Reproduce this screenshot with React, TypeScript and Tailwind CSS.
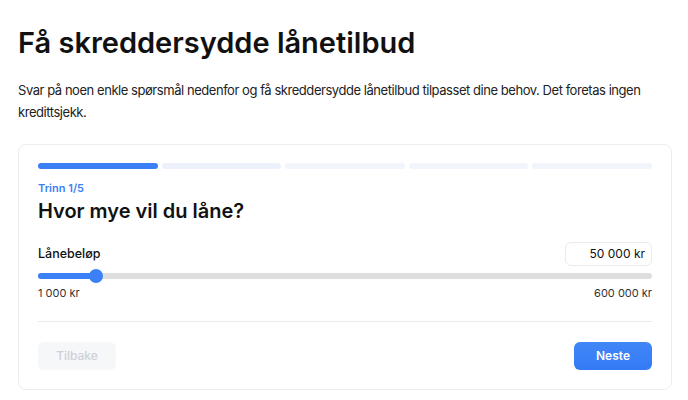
import { useState } from "react";

const MIN = 1000;
const MAX = 600000;
const STEPS = 5;

function formatKr(n: number) {
  return n.toLocaleString("en-US").replace(/,/g, " ") + " kr";
}

export default function App() {
  const [amount] = useState(50000);
  const step = 1;
  const pct = (amount - MIN) / (MAX - MIN);

  return (
    <div
      className="min-h-screen bg-white pt-[26px] pl-[18px] pr-[16px] text-[#111]"
      style={{ fontFamily: "Inter, 'Noto Sans', sans-serif" }}
    >
      <h1 className="text-[29px] leading-[34px] font-semibold">Få skreddersydde lånetilbud</h1>
      <p className="mt-[19px] text-[13px] leading-[22px] tracking-[-0.45px] text-[#222]">
        Svar på noen enkle spørsmål nedenfor og få skreddersydde lånetilbud tilpasset dine behov. Det foretas ingen
        kredittsjekk.
      </p>

      {/* Wizard card */}
      <div className="mt-[21px] w-[654px] rounded-lg border border-[#ededf0] px-[19px] pt-[18px] pb-[19px]">
        <div className="flex gap-1">
          {Array.from({ length: STEPS }).map((_, i) => (
            <div
              key={i}
              className={`h-[6px] flex-1 rounded-full ${
                i < step ? "bg-[#3b80f6]" : i === step ? "bg-[#ecf1fc]" : "bg-[#f2f5fb]"
              }`}
            />
          ))}
        </div>

        <div className="mt-[11px] text-[11px] leading-4 font-semibold text-[#3b80f6]">
          Trinn {step}/{STEPS}
        </div>
        <h2 className="mt-[1px] text-[20px] leading-7 font-semibold">Hvor mye vil du låne?</h2>

        <div className="mt-[17px] flex items-center justify-between">
          <label className="text-[12.5px] leading-5 font-medium">Lånebeløp</label>
          <div className="flex h-6 w-[87px] items-center justify-end rounded-md border border-[#ebebee] pr-[6px] text-[12px]">
            {formatKr(amount)}
          </div>
        </div>

        {/* Slider */}
        <div className="relative mt-[3px] h-[14px]">
          <div className="absolute inset-x-0 top-1/2 h-[6px] -translate-y-1/2 rounded-full bg-[#dedede]" />
          <div
            className="absolute left-0 top-1/2 h-[6px] -translate-y-1/2 rounded-full bg-[#3b80f6]"
            style={{ width: `calc(${pct} * (100% - 14px) + 9px)` }}
          />
          <div
            className="absolute top-0 h-[14px] w-[14px] rounded-full bg-[#3b80f6]"
            style={{ left: `calc(${pct} * (100% - 14px) + 2px)` }}
          />
        </div>
        <div className="mt-[2px] flex justify-between text-[11px] leading-4 text-[#333]">
          <span>{formatKr(MIN)}</span>
          <span>{formatKr(MAX)}</span>
        </div>

        <div className="mt-[20px] h-px bg-[#e9e9ee]" />

        <div className="mt-[20px] flex justify-between">
          <button
            disabled
            className="h-7 w-[78px] rounded-md bg-[#f6f7f9] text-[12px] font-medium text-[#cdd1d8]"
          >
            Tilbake
          </button>
          <button className="h-7 w-[78px] rounded-md bg-gradient-to-b from-[#4187f7] to-[#347af5] text-[12px] font-semibold text-white">
            Neste
          </button>
        </div>
      </div>
    </div>
  );
}
